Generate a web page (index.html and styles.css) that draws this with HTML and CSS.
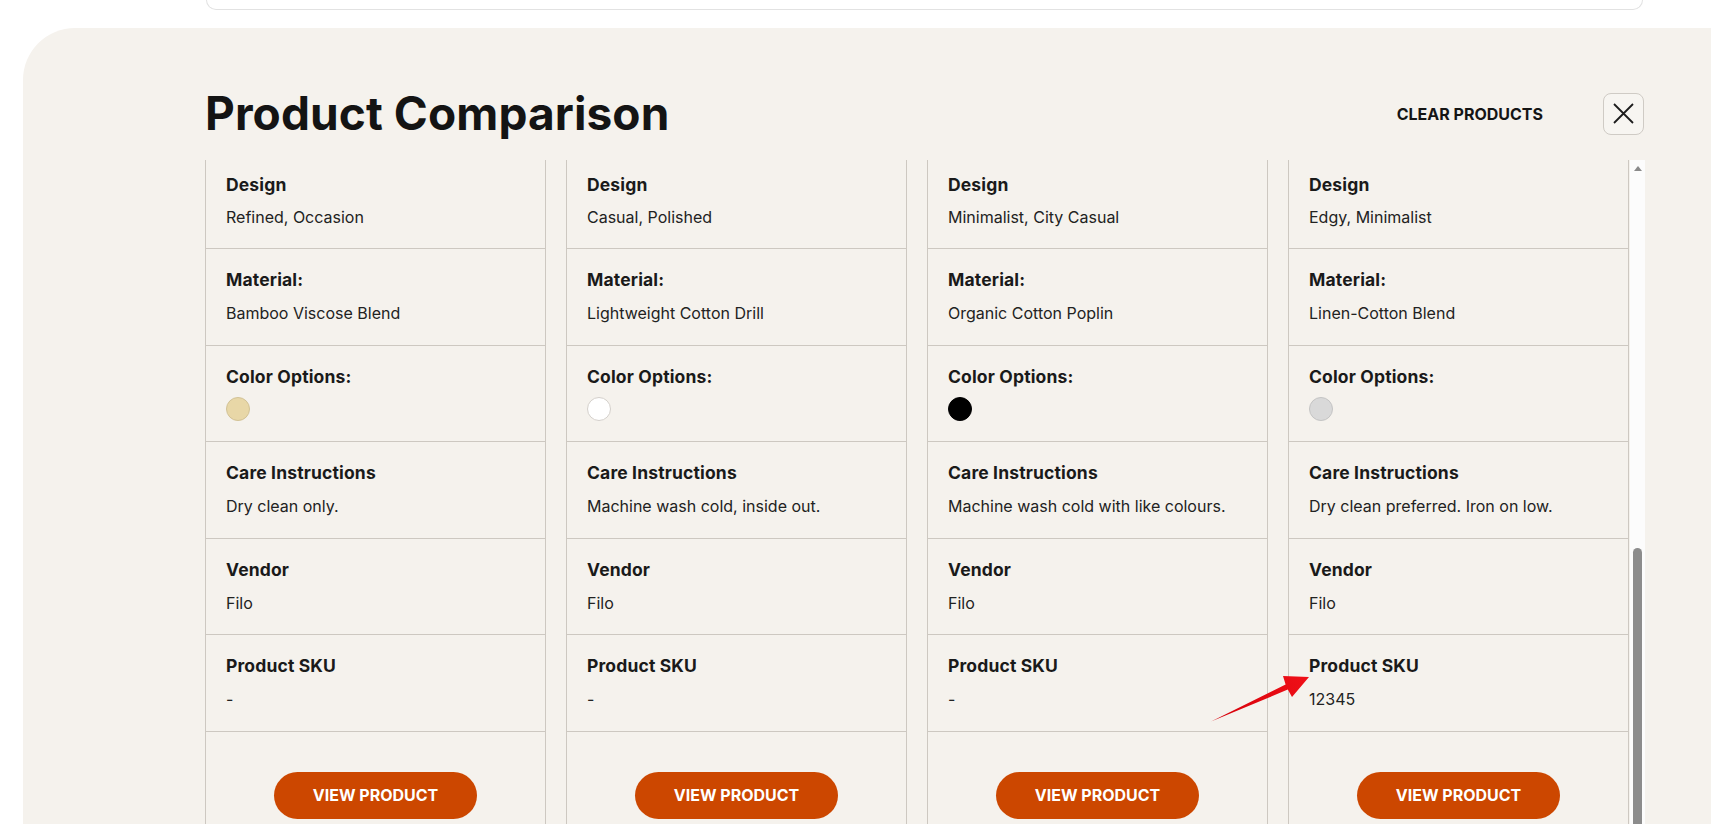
FILE: index.html
```
<!DOCTYPE html>
<html lang="en">
<head>
<meta charset="utf-8">
<title>Product Comparison</title>
<link rel="stylesheet" href="styles.css">
</head>
<body>
<div class="top-card"></div>
<section class="panel">
  <div class="container">
    <header class="header">
      <h1 class="title">Product Comparison</h1>
      <div class="actions">
        <button class="clear-btn" type="button">CLEAR PRODUCTS</button>
        <button class="close-btn" type="button" aria-label="Close">
          <svg width="21" height="21" viewBox="0 0 21 21"><path d="M1 1 L20 20 M20 1 L1 20" stroke="#1c1c1c" stroke-width="1.8" fill="none"/></svg>
        </button>
      </div>
    </header>
    <div class="viewport">
      <div class="columns">
        <div class="col">
          <div class="row first"><div class="label">Design</div><div class="value">Refined, Occasion</div></div>
          <div class="row"><div class="label">Material:</div><div class="value">Bamboo Viscose Blend</div></div>
          <div class="row color-row"><div class="label">Color Options:</div><span class="swatch swatch-sand"></span></div>
          <div class="row"><div class="label">Care Instructions</div><div class="value">Dry clean only.</div></div>
          <div class="row"><div class="label">Vendor</div><div class="value">Filo</div></div>
          <div class="row"><div class="label">Product SKU</div><div class="value">-</div></div>
          <div class="row btn-row"><a class="view-btn" href="#">VIEW PRODUCT</a></div>
        </div>
        <div class="col">
          <div class="row first"><div class="label">Design</div><div class="value">Casual, Polished</div></div>
          <div class="row"><div class="label">Material:</div><div class="value">Lightweight Cotton Drill</div></div>
          <div class="row color-row"><div class="label">Color Options:</div><span class="swatch swatch-white"></span></div>
          <div class="row"><div class="label">Care Instructions</div><div class="value">Machine wash cold, inside out.</div></div>
          <div class="row"><div class="label">Vendor</div><div class="value">Filo</div></div>
          <div class="row"><div class="label">Product SKU</div><div class="value">-</div></div>
          <div class="row btn-row"><a class="view-btn" href="#">VIEW PRODUCT</a></div>
        </div>
        <div class="col">
          <div class="row first"><div class="label">Design</div><div class="value">Minimalist, City Casual</div></div>
          <div class="row"><div class="label">Material:</div><div class="value">Organic Cotton Poplin</div></div>
          <div class="row color-row"><div class="label">Color Options:</div><span class="swatch swatch-black"></span></div>
          <div class="row"><div class="label">Care Instructions</div><div class="value">Machine wash cold with like colours.</div></div>
          <div class="row"><div class="label">Vendor</div><div class="value">Filo</div></div>
          <div class="row"><div class="label">Product SKU</div><div class="value">-</div></div>
          <div class="row btn-row"><a class="view-btn" href="#">VIEW PRODUCT</a></div>
        </div>
        <div class="col">
          <div class="row first"><div class="label">Design</div><div class="value">Edgy, Minimalist</div></div>
          <div class="row"><div class="label">Material:</div><div class="value">Linen-Cotton Blend</div></div>
          <div class="row color-row"><div class="label">Color Options:</div><span class="swatch swatch-grey"></span></div>
          <div class="row"><div class="label">Care Instructions</div><div class="value">Dry clean preferred. Iron on low.</div></div>
          <div class="row"><div class="label">Vendor</div><div class="value">Filo</div></div>
          <div class="row"><div class="label">Product SKU</div><div class="value">12345</div></div>
          <div class="row btn-row"><a class="view-btn" href="#">VIEW PRODUCT</a></div>
        </div>
      </div>
      <div class="scrollbar">
        <span class="scroll-arrow"></span>
        <span class="scroll-thumb"></span>
      </div>
    </div>
  </div>
</section>
<svg class="annotation" width="1711" height="824" viewBox="0 0 1711 824">
  <defs>
    <linearGradient id="arrowGrad" x1="1212" y1="721" x2="1309" y2="677" gradientUnits="userSpaceOnUse">
      <stop offset="0" stop-color="#d4000a"/>
      <stop offset="1" stop-color="#f01018"/>
    </linearGradient>
  </defs>
  <polygon points="1211,721.5 1285.6,684.6 1283,676 1309,677 1292,697 1287.8,689.6" fill="url(#arrowGrad)"/>
</svg>
</body>
</html>
```
FILE: styles.css
```
* { box-sizing: border-box; }

html, body {
  margin: 0;
  padding: 0;
  background: #ffffff;
  height: 824px;
  overflow: hidden;
}

body {
  font-family: Inter, "Noto Sans", sans-serif;
  color: #1b1b1b;
  position: relative;
}

.top-card {
  margin-left: 206px;
  width: 1437px;
  height: 10px;
  border: 1px solid #e2e2e2;
  border-top: none;
  border-radius: 0 0 20px 20px;
  background: #ffffff;
}

.panel {
  margin-top: 18px;
  margin-left: 23px;
  height: 796px;
  background: #f5f2ed;
  border-top-left-radius: 52px;
  padding: 59px 0 0 182px;
}

.container {
  width: 1440px;
}

.header {
  display: flex;
  align-items: center;
  justify-content: space-between;
  height: 53px;
}

.title {
  margin: 0;
  font-size: 46px;
  line-height: 53px;
  font-weight: 700;
  color: #141414;
  letter-spacing: 0.1px;
}

.actions {
  display: flex;
  align-items: center;
  gap: 60px;
  padding-right: 1px;
}

.clear-btn {
  border: none;
  background: none;
  padding: 0;
  font-family: Inter, sans-serif;
  font-size: 16px;
  font-weight: 700;
  color: #151515;
  cursor: pointer;
}

.close-btn {
  width: 41px;
  height: 42px;
  display: flex;
  align-items: center;
  justify-content: center;
  border: 1px solid #cfcbc5;
  border-radius: 8px;
  background: #f7f5f1;
  padding: 0;
  cursor: pointer;
}

.viewport {
  margin-top: 20px;
  height: 664px;
  display: flex;
  overflow: hidden;
}

.columns {
  display: flex;
  gap: 20px;
}

.col {
  width: 341px;
  border-left: 1px solid #cdc8c1;
  border-right: 1px solid #cdc8c1;
  display: flex;
  flex-direction: column;
}

.row {
  padding: 19px 20px 19.5px 20px;
  border-bottom: 1px solid #cdc8c1;
}

.row.first {
  padding-top: 13px;
  padding-bottom: 19px;
}

.label {
  font-size: 17.5px;
  line-height: 24px;
  font-weight: 700;
  color: #1a1a1a;
  letter-spacing: 0.15px;
}

.first .value {
  margin-top: 8px;
}

.value {
  margin-top: 9px;
  font-size: 16px;
  line-height: 24px;
  color: #222222;
}

.color-row {
  padding-bottom: 20.5px;
}

.swatch {
  display: block;
  margin-top: 8px;
  width: 24px;
  height: 24px;
  border-radius: 50%;
  border: 1px solid #c9c3bb;
}

.swatch-sand { background: #e8d7a7; border-color: #d2c296; }
.swatch-white { background: #ffffff; border-color: #d4d0cb; }
.swatch-black { background: #000000; border-color: #000000; }
.swatch-grey { background: #d9d9d9; border-color: #c4c4c4; }

.btn-row {
  border-bottom: none;
  padding-top: 40px;
  display: flex;
  justify-content: center;
}

.view-btn {
  display: flex;
  align-items: center;
  justify-content: center;
  width: 203px;
  height: 47px;
  border-radius: 24px;
  background: #cc4700;
  color: #ffffff;
  font-size: 16px;
  font-weight: 700;
  text-decoration: none;
}

.scrollbar {
  margin-left: 1px;
  width: 15px;
  background: #fcfcfc;
  display: flex;
  flex-direction: column;
  align-items: center;
}

.scroll-arrow {
  margin-top: 6px;
  width: 0;
  height: 0;
  border-left: 4px solid transparent;
  border-right: 4px solid transparent;
  border-bottom: 5px solid #8a8a8a;
}

.scroll-thumb {
  margin-top: 377px;
  width: 9px;
  flex: 1;
  background: #8c8c8c;
  border-radius: 5px 5px 0 0;
}

.annotation {
  position: absolute;
  left: 0;
  top: 0;
  pointer-events: none;
}
```
